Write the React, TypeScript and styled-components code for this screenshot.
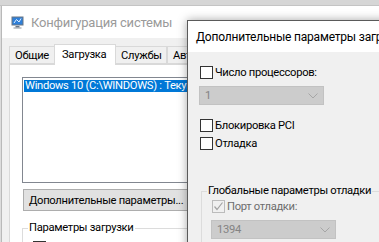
import React from 'react';
import styled, { createGlobalStyle } from 'styled-components';

const GlobalStyle = createGlobalStyle`
  html, body {
    margin: 0;
    padding: 0;
    overflow: hidden;
  }
  body {
    font-family: Roboto, "Noto Sans", sans-serif;
    font-size: 11.2px;
    letter-spacing: -0.3px;
    color: #000;
  }
`;

const Desktop = styled.div`
  position: relative;
  width: 379px;
  height: 242px;
  overflow: hidden;
  background: #dcdcdc;
`;

const TopStrip = styled.div`
  height: 5px;
  background: #d6d6d6;
  border-bottom: 1px solid #c4c4c4;
`;

const MainWindow = styled.div`
  position: absolute;
  z-index: 1;
  left: 1px;
  top: 6px;
  width: 460px;
  height: 300px;
  background: #f0f0f0;
  border-left: 1px solid #b9b9b9;
  display: flex;
  flex-direction: column;
`;

const TitleBar = styled.div<{ h: number; pad: number }>`
  height: ${p => p.h}px;
  flex: none;
  background: #fff;
  display: flex;
  align-items: center;
  gap: 7px;
  padding-left: ${p => p.pad}px;
`;

const TitleText = styled.span<{ inactive?: boolean; size: number }>`
  font-size: ${p => p.size}px;
  letter-spacing: -0.2px;
  color: ${p => (p.inactive ? '#9a9a9a' : '#000')};
  white-space: nowrap;
`;

const MainBody = styled.div`
  padding: 6px 0 0 7px;
  display: flex;
  flex-direction: column;
`;

const TabStrip = styled.div`
  display: flex;
  align-items: flex-end;
  height: 20px;
  flex: none;
  position: relative;
  z-index: 1;
`;

const Tab = styled.div<{ active?: boolean; w: number }>`
  width: ${p => p.w}px;
  height: ${p => (p.active ? 21 : 18)}px;
  margin-bottom: ${p => (p.active ? -1 : 0)}px;
  box-sizing: border-box;
  border: 1px solid #d9d9d9;
  border-bottom: ${p => (p.active ? 'none' : '1px solid #d9d9d9')};
  margin-left: ${p => (p.active ? -1 : 0)}px;
  margin-right: ${p => (p.active ? -1 : 0)}px;
  background: ${p => (p.active ? '#fff' : '#f0f0f0')};
  display: flex;
  align-items: center;
  padding-left: ${p => (p.active ? 7 : 5)}px;
  padding-bottom: ${p => (p.active ? 2 : 0)}px;
  white-space: nowrap;
  overflow: hidden;
  flex: none;
`;

const TabPanel = styled.div`
  background: #fff;
  border: 1px solid #d9d9d9;
  height: 260px;
  padding: 12px 0 0 12px;
  display: flex;
  flex-direction: column;
  align-items: flex-start;
  & > * {
    flex-shrink: 0;
  }
`;

const ListBox = styled.div`
  width: 200px;
  height: 106px;
  border: 1px solid #828790;
  padding: 2px 0 0 1px;
  box-sizing: border-box;
`;

const ListItem = styled.div<{ selected?: boolean }>`
  height: 12px;
  line-height: 12px;
  padding-left: 1px;
  background: ${p => (p.selected ? '#0078d7' : 'transparent')};
  color: ${p => (p.selected ? '#fff' : '#000')};
  white-space: nowrap;
`;

const Button = styled.div`
  margin-top: 6px;
  width: 200px;
  height: 22px;
  box-sizing: border-box;
  margin-left: 1px;
  background: #e1e1e1;
  border: 1px solid #adadad;
  display: flex;
  align-items: center;
  padding-left: 5px;
  white-space: nowrap;
`;

const Spacer = styled.div<{ h: number }>`
  height: ${p => p.h}px;
  flex: none;
`;

const GroupBox = styled.fieldset<{ w: number; left: number }>`
  margin: 0 0 0 ${p => p.left}px;
  width: ${p => p.w}px;
  height: 120px;
  border: 1px solid #dcdcdc;
  padding: 0 0 0 10px;
  box-sizing: border-box;
  display: flex;
  flex-direction: column;
  align-items: flex-start;
`;

const Legend = styled.legend`
  padding: 0 1px;
  margin-left: -5px;
  line-height: 14px;
  white-space: nowrap;
`;

const Dialog = styled.div`
  position: absolute;
  z-index: 2;
  left: 187px;
  top: 20px;
  width: 260px;
  height: 300px;
  background: #f0f0f0;
  border: 1px solid #5a5a5a;
  box-shadow: 0 0 9px rgba(0, 0, 0, 0.35);
  display: flex;
  flex-direction: column;
`;

const DialogBody = styled.div`
  padding: 14px 0 0 12px;
  display: flex;
  flex-direction: column;
  align-items: flex-start;
`;

const CheckRow = styled.label<{ top: number; disabled?: boolean }>`
  margin-top: ${p => p.top}px;
  display: flex;
  align-items: center;
  gap: 2px;
  height: 13px;
  color: ${p => (p.disabled ? '#6d6d6d' : '#000')};
  white-space: nowrap;
`;

const Box = styled.span<{ disabled?: boolean }>`
  width: 13px;
  height: 13px;
  box-sizing: border-box;
  border: 1px solid ${p => (p.disabled ? '#bcbcbc' : '#333')};
  background: ${p => (p.disabled ? '#f0f0f0' : '#fff')};
  display: flex;
  align-items: center;
  justify-content: center;
  flex: none;
`;

const Combo = styled.div<{ top: number; left: number }>`
  margin-top: ${p => p.top}px;
  margin-left: ${p => p.left}px;
  width: 125px;
  height: 19px;
  box-sizing: border-box;
  background: #cccccc;
  border: 1px solid #c2c2c2;
  display: flex;
  align-items: center;
  justify-content: space-between;
  padding: 0 5px 0 5px;
  color: #838383;
`;

const MonitorIcon = () => (
  <svg width="13" height="14" viewBox="0 0 13 14">
    <rect x="0.5" y="1.5" width="12" height="9" fill="#6b7683" />
    <rect x="1.5" y="2.5" width="10" height="7" fill="#2f7fd8" />
    <path d="M3 8 L5.5 4.5 L8 7 L10 3.5" stroke="#dfefff" strokeWidth="1" fill="none" />
    <rect x="4.5" y="11" width="4" height="1.5" fill="#6b7683" />
    <rect x="2.5" y="12.5" width="8" height="1" fill="#8d96a0" />
  </svg>
);

const Chevron = () => (
  <svg width="10" height="6" viewBox="0 0 10 6">
    <path d="M0.5 0.5 L5 5 L9.5 0.5" stroke="#a6a6a6" strokeWidth="1" fill="none" />
  </svg>
);

const Check = () => (
  <svg width="11" height="11" viewBox="0 0 11 11">
    <path d="M1.5 5.5 L4 8.5 L9.5 1.5" stroke="#a3a3a3" strokeWidth="1.2" fill="none" />
  </svg>
);

export default function App() {
  return (
    <>
      <GlobalStyle />
      <Desktop>
        <TopStrip />
        <MainWindow>
          <TitleBar h={32} pad={9}>
            <MonitorIcon />
            <TitleText inactive size={13}>Конфигурация системы</TitleText>
          </TitleBar>
          <MainBody>
            <TabStrip>
              <Tab w={46}>Общие</Tab>
              <Tab w={62} active>Загрузка</Tab>
              <Tab w={52}>Службы</Tab>
              <Tab w={80}>Автозагрузка</Tab>
            </TabStrip>
            <TabPanel>
              <ListBox>
                <ListItem selected>Windows 10 (C:\WINDOWS) : Текущая ОС; ОС по умолчанию</ListItem>
              </ListBox>
              <Button>Дополнительные параметры...</Button>
              <Spacer h={10} />
              <GroupBox w={260} left={0}>
                <Legend>Параметры загрузки</Legend>
                <Spacer h={6} />
                <Box />
              </GroupBox>
            </TabPanel>
          </MainBody>
        </MainWindow>
        <Dialog>
          <TitleBar h={31} pad={8}>
            <TitleText size={12}>Дополнительные параметры загрузки</TitleText>
          </TitleBar>
          <DialogBody>
            <CheckRow top={0}>
              <Box />
              Число процессоров:
            </CheckRow>
            <Combo top={7} left={-1}>
              1
              <Chevron />
            </Combo>
            <CheckRow top={14}>
              <Box />
              Блокировка PCI
            </CheckRow>
            <CheckRow top={5}>
              <Box />
              Отладка
            </CheckRow>
            <Spacer h={34} />
            <GroupBox w={240} left={1}>
              <Legend>Глобальные параметры отладки</Legend>
              <CheckRow top={2} disabled>
                <Box disabled>
                  <Check />
                </Box>
                Порт отладки:
              </CheckRow>
              <Combo top={7} left={-1}>
                1394
                <Chevron />
              </Combo>
            </GroupBox>
          </DialogBody>
        </Dialog>
      </Desktop>
    </>
  );
}
